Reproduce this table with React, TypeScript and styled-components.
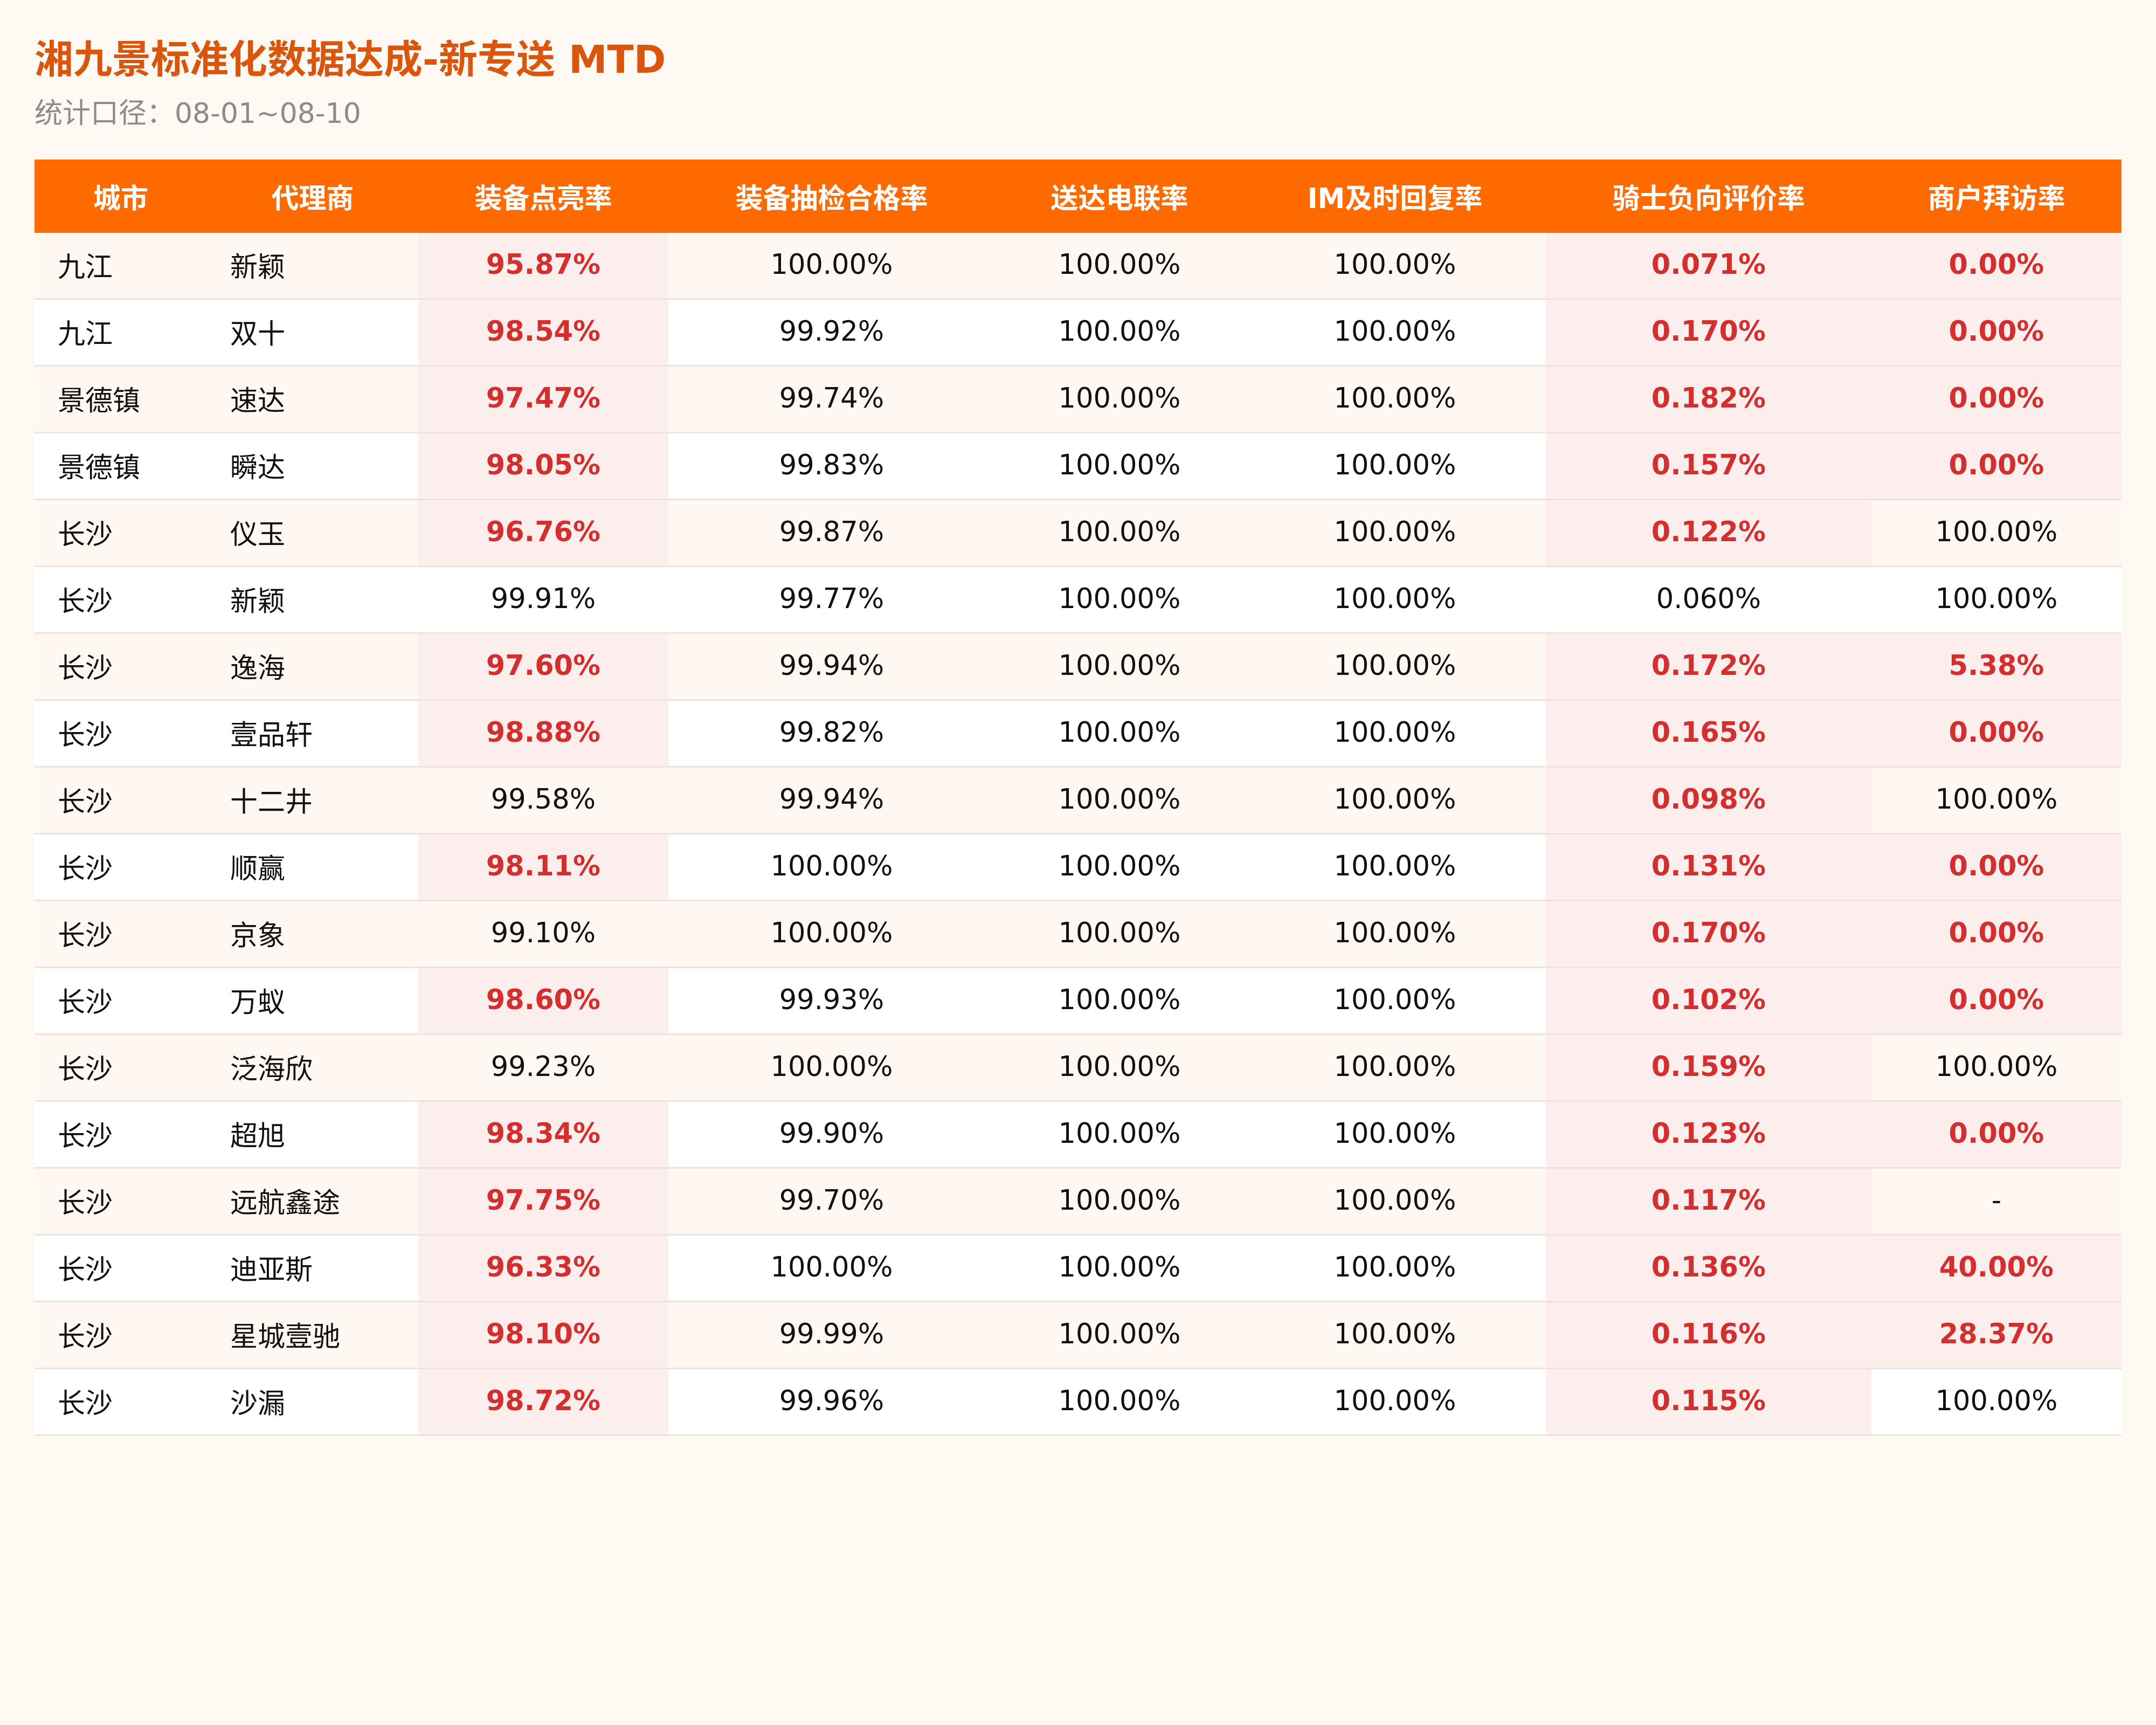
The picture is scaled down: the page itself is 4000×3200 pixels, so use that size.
import React from "react";
import styled, { createGlobalStyle } from "styled-components";

const GlobalStyle = createGlobalStyle`
  html, body {
    margin: 0;
    padding: 0;
    background: #fff9f4;
  }
  body {
    font-family: "DejaVu Sans", "Noto Sans CJK SC", sans-serif;
  }
`;

interface Row {
  city: string;
  agent: string;
  light: string;
  check: string;
  call: string;
  im: string;
  negative: string;
  visit: string;
  bad: {
    light?: boolean;
    negative?: boolean;
    visit?: boolean;
  };
}

const rows: Row[] = [
  { city: "九江", agent: "新颖", light: "95.87%", check: "100.00%", call: "100.00%", im: "100.00%", negative: "0.071%", visit: "0.00%", bad: { light: true, negative: true, visit: true } },
  { city: "九江", agent: "双十", light: "98.54%", check: "99.92%", call: "100.00%", im: "100.00%", negative: "0.170%", visit: "0.00%", bad: { light: true, negative: true, visit: true } },
  { city: "景德镇", agent: "速达", light: "97.47%", check: "99.74%", call: "100.00%", im: "100.00%", negative: "0.182%", visit: "0.00%", bad: { light: true, negative: true, visit: true } },
  { city: "景德镇", agent: "瞬达", light: "98.05%", check: "99.83%", call: "100.00%", im: "100.00%", negative: "0.157%", visit: "0.00%", bad: { light: true, negative: true, visit: true } },
  { city: "长沙", agent: "仪玉", light: "96.76%", check: "99.87%", call: "100.00%", im: "100.00%", negative: "0.122%", visit: "100.00%", bad: { light: true, negative: true } },
  { city: "长沙", agent: "新颖", light: "99.91%", check: "99.77%", call: "100.00%", im: "100.00%", negative: "0.060%", visit: "100.00%", bad: {} },
  { city: "长沙", agent: "逸海", light: "97.60%", check: "99.94%", call: "100.00%", im: "100.00%", negative: "0.172%", visit: "5.38%", bad: { light: true, negative: true, visit: true } },
  { city: "长沙", agent: "壹品轩", light: "98.88%", check: "99.82%", call: "100.00%", im: "100.00%", negative: "0.165%", visit: "0.00%", bad: { light: true, negative: true, visit: true } },
  { city: "长沙", agent: "十二井", light: "99.58%", check: "99.94%", call: "100.00%", im: "100.00%", negative: "0.098%", visit: "100.00%", bad: { negative: true } },
  { city: "长沙", agent: "顺赢", light: "98.11%", check: "100.00%", call: "100.00%", im: "100.00%", negative: "0.131%", visit: "0.00%", bad: { light: true, negative: true, visit: true } },
  { city: "长沙", agent: "京象", light: "99.10%", check: "100.00%", call: "100.00%", im: "100.00%", negative: "0.170%", visit: "0.00%", bad: { negative: true, visit: true } },
  { city: "长沙", agent: "万蚁", light: "98.60%", check: "99.93%", call: "100.00%", im: "100.00%", negative: "0.102%", visit: "0.00%", bad: { light: true, negative: true, visit: true } },
  { city: "长沙", agent: "泛海欣", light: "99.23%", check: "100.00%", call: "100.00%", im: "100.00%", negative: "0.159%", visit: "100.00%", bad: { negative: true } },
  { city: "长沙", agent: "超旭", light: "98.34%", check: "99.90%", call: "100.00%", im: "100.00%", negative: "0.123%", visit: "0.00%", bad: { light: true, negative: true, visit: true } },
  { city: "长沙", agent: "远航鑫途", light: "97.75%", check: "99.70%", call: "100.00%", im: "100.00%", negative: "0.117%", visit: "-", bad: { light: true, negative: true } },
  { city: "长沙", agent: "迪亚斯", light: "96.33%", check: "100.00%", call: "100.00%", im: "100.00%", negative: "0.136%", visit: "40.00%", bad: { light: true, negative: true, visit: true } },
  { city: "长沙", agent: "星城壹驰", light: "98.10%", check: "99.99%", call: "100.00%", im: "100.00%", negative: "0.116%", visit: "28.37%", bad: { light: true, negative: true, visit: true } },
  { city: "长沙", agent: "沙漏", light: "98.72%", check: "99.96%", call: "100.00%", im: "100.00%", negative: "0.115%", visit: "100.00%", bad: { light: true, negative: true } },
];

const columns = [
  { title: "城市", width: 320 },
  { title: "代理商", width: 392 },
  { title: "装备点亮率", width: 464 },
  { title: "装备抽检合格率", width: 606 },
  { title: "送达电联率", width: 462 },
  { title: "IM及时回复率", width: 560 },
  { title: "骑士负向评价率", width: 604 },
  { title: "商户拜访率", width: 464 },
];

const Page = styled.div`
  width: 4000px;
  height: 3200px;
  box-sizing: border-box;
  padding: 66px 64px 0;
  background: #fff9f4;
`;

const Title = styled.h1`
  margin: 0;
  font-size: 72px;
  line-height: 88px;
  font-weight: bold;
  color: #d9560c;
`;

const Subtitle = styled.div`
  margin-top: 26px;
  font-size: 52px;
  line-height: 61px;
  color: #8c8c8c;
`;

const Table = styled.table`
  margin-top: 55px;
  width: 3872px;
  table-layout: fixed;
  border-collapse: separate;
  border-spacing: 0;
  font-size: 51px;
`;

const Col = styled.col<{ $width: number }>`
  width: ${(p) => p.$width}px;
`;

const HeadCell = styled.th`
  height: 136px;
  padding: 0;
  background: #ff6a00;
  color: #ffffff;
  font-weight: bold;
  text-align: center;
  vertical-align: middle;
  white-space: nowrap;
`;

const BodyRow = styled.tr<{ $odd: boolean }>`
  background: ${(p) => (p.$odd ? "#fff8f2" : "#ffffff")};
`;

const Cell = styled.td<{ $left?: boolean; $bad?: boolean }>`
  box-sizing: border-box;
  height: 124px;
  padding: 0 0 4px ${(p) => (p.$left ? "43px" : "0")};
  border-bottom: 3px solid #efe4dd;
  text-align: ${(p) => (p.$left ? "left" : "center")};
  vertical-align: middle;
  white-space: nowrap;
  color: ${(p) => (p.$bad ? "#d32f2f" : "#111111")};
  font-weight: ${(p) => (p.$bad ? "bold" : "normal")};
  background: ${(p) => (p.$bad ? "#fdeeee" : "transparent")};
`;

export default function App() {
  return (
    <>
      <GlobalStyle />
      <Page>
        <Title>湘九景标准化数据达成-新专送 MTD</Title>
        <Subtitle>统计口径：08-01~08-10</Subtitle>
        <Table>
          <colgroup>
            {columns.map((c) => (
              <Col key={c.title} $width={c.width} />
            ))}
          </colgroup>
          <thead>
            <tr>
              {columns.map((c) => (
                <HeadCell key={c.title}>{c.title}</HeadCell>
              ))}
            </tr>
          </thead>
          <tbody>
            {rows.map((r, i) => (
              <BodyRow key={i} $odd={i % 2 === 0}>
                <Cell $left>{r.city}</Cell>
                <Cell $left>{r.agent}</Cell>
                <Cell $bad={r.bad.light}>{r.light}</Cell>
                <Cell>{r.check}</Cell>
                <Cell>{r.call}</Cell>
                <Cell>{r.im}</Cell>
                <Cell $bad={r.bad.negative}>{r.negative}</Cell>
                <Cell $bad={r.bad.visit}>{r.visit}</Cell>
              </BodyRow>
            ))}
          </tbody>
        </Table>
      </Page>
    </>
  );
}
